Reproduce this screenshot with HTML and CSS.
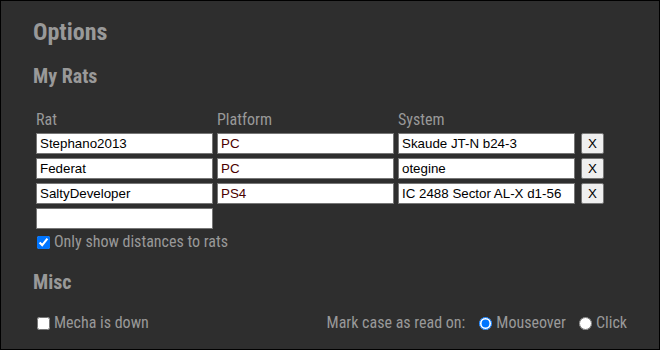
FILE: index.html
```html
<!DOCTYPE html>
<html lang="en">
<head>
  <meta charset="UTF-8" />
  <title>Options</title>
  <link rel="stylesheet" href="styles.css">
</head>
<body>
  <div class="options">
    <h1>Options</h1>

    <!-- Rats -->
    <h2>My Rats</h2>
    <div class="rat-table">
      <span class="col-label">Rat</span>
      <span class="col-label">Platform</span>
      <span class="col-label">System</span>
      <span></span>

      <input type="text" value="Stephano2013">
      <input type="text" class="platform" value="PC">
      <input type="text" value="Skaude JT-N b24-3">
      <button>X</button>

      <input type="text" value="Federat">
      <input type="text" class="platform" value="PC">
      <input type="text" value="otegine">
      <button>X</button>

      <input type="text" value="SaltyDeveloper">
      <input type="text" class="platform" value="PS4">
      <input type="text" value="IC 2488 Sector AL-X d1-56">
      <button>X</button>

      <input type="text" value="">
    </div>
    <label class="check"><input type="checkbox" checked> Only show distances to rats</label>

    <!-- Misc -->
    <h2 class="misc-title">Misc</h2>
    <div class="misc-row">
      <label class="check"><input type="checkbox"> Mecha is down</label>
      <div class="read-on">
        <span class="read-label">Mark case as read on:</span>
        <label class="radio"><input type="radio" name="readon" checked>Mouseover</label>
        <label class="radio"><input type="radio" name="readon">Click</label>
      </div>
    </div>
  </div>
</body>
</html>
```

FILE: styles.css
```css
* {
  box-sizing: border-box;
}
html, body {
  height: 100%;
}
body {
  margin: 0;
  background: #2e2e2e;
  border: 1px solid #000;
  font-family: 'Roboto Condensed', Roboto, sans-serif;
  font-stretch: condensed;
  font-size: 16px;
  color: #999;
}
.options {
  padding: 14px 32px 0 32px;
}
h1 {
  margin: 0;
  font-size: 24px;
  font-weight: 700;
  line-height: 35px;
}
h2 {
  margin: 13px 0 0 0;
  font-size: 20px;
  font-weight: 700;
  line-height: 26px;
}
/* Rat rows */
.rat-table {
  display: grid;
  grid-template-columns: 177px 177px 177px 23px;
  column-gap: 4px;
  row-gap: 4px;
  margin: 21px 0 0 3px;
  align-items: center;
}
.rat-table .col-label {
  line-height: 20px;
  margin-bottom: -1px;
}
.rat-table input {
  width: 177px;
  height: 21px;
  margin: 0;
  padding: 1px 3px;
  border: 1px solid #767676;
  border-radius: 0;
  background: #fff;
  font-family: 'Liberation Sans', Arial, sans-serif;
  font-size: 13.33px;
  color: #000;
}
.rat-table input.platform {
  color: #4a0000;
}
.rat-table button {
  width: 23px;
  height: 21px;
  margin-left: 2px;
  padding: 0;
  border: 1px solid #767676;
  border-radius: 2px;
  background: #efefef;
  font-family: 'Liberation Sans', Arial, sans-serif;
  font-size: 13.33px;
  color: #000;
}
.check {
  display: flex;
  align-items: center;
  gap: 4px;
  margin: 3px 0 0 4px;
  line-height: 20px;
}
.check input {
  margin: 0;
  width: 13px;
  height: 13px;
}
.misc-title {
  margin-top: 17px;
}
.misc-row {
  display: flex;
  justify-content: space-between;
  align-items: center;
  margin-top: 18px;
  line-height: 20px;
}
.misc-row .check {
  margin-top: 0;
}
.read-on {
  display: flex;
  align-items: center;
}
.read-label {
  margin-right: 1px;
}
.radio {
  display: flex;
  align-items: center;
  gap: 4px;
  margin-left: 13px;
}
.radio input {
  margin: 0;
  width: 13px;
  height: 13px;
}
```
